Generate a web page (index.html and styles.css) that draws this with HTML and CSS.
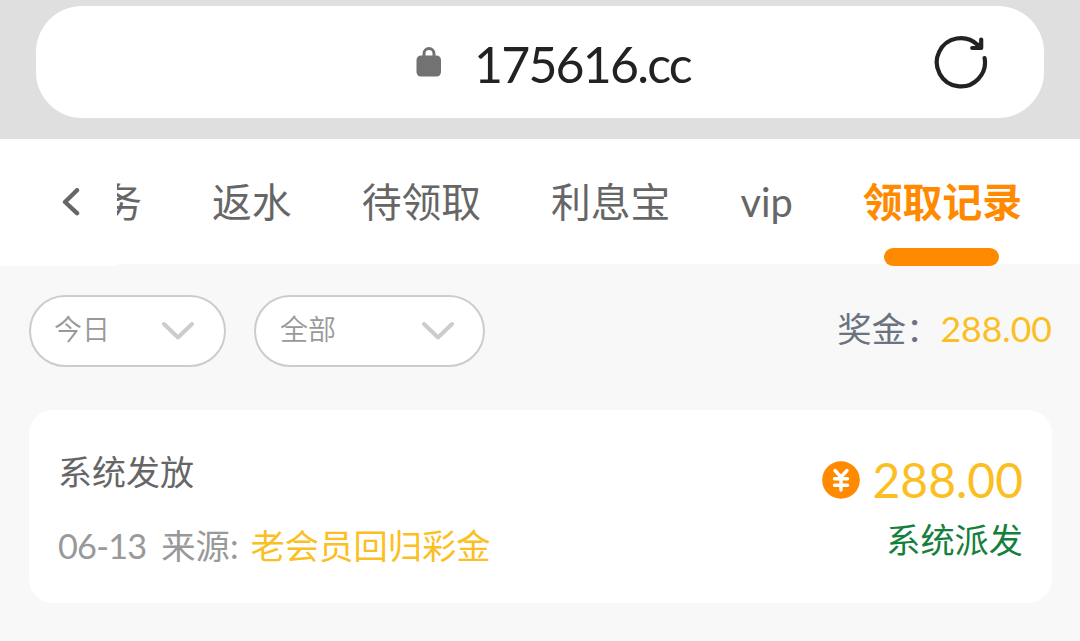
FILE: index.html
```
<!DOCTYPE html>
<html lang="zh-CN">
<head>
  <meta charset="UTF-8" />
  <meta name="viewport" content="width=device-width, initial-scale=1.0"/>
  <title>领取记录</title>
  <link rel="stylesheet" href="styles.css">
</head>
<body>
  <header class="browser-bar">
    <div class="address">
      <svg class="lock" width="26" height="32" viewBox="0 0 26 32">
        <path d="M8 13V7.5a5 5 0 0 1 10 0V13" fill="none" stroke="#727272" stroke-width="3"/>
        <rect x="0.5" y="9.5" width="24.5" height="21" rx="4.5" fill="#727272"/>
      </svg>
      <span class="url">175616.cc</span>
      <svg class="reload" width="56" height="56" viewBox="0 0 56 56" fill="none" stroke="#222" stroke-width="4.2" stroke-linecap="round" stroke-linejoin="round">
        <path d="M51.6 24A24.1 24.1 0 1 1 44.5 10.8L47.5 13.8"/>
        <path d="M48.2 5.5V14H39.2M44.5 12.8L47 10.5"/>
      </svg>
    </div>
  </header>

  <nav class="tabs">
    <button class="back">
      <svg width="18" height="28" viewBox="0 0 18 28" fill="none" stroke="#666" stroke-width="4.4" stroke-linecap="round" stroke-linejoin="round">
        <path d="M15 2.2L3 14L15 25.2"/>
      </svg>
    </button>
    <div class="tab-list">
      <a class="tab">任务</a>
      <a class="tab">返水</a>
      <a class="tab">待领取</a>
      <a class="tab">利息宝</a>
      <a class="tab">vip</a>
      <a class="tab active">领取记录</a>
    </div>
  </nav>

  <main>
    <div class="filters">
      <div class="select">
        <span>今日</span>
        <svg width="34" height="22" viewBox="0 0 34 22" fill="none" stroke="#ccc" stroke-width="4" stroke-linecap="round" stroke-linejoin="round">
          <path d="M3 4L17 17.5L31 4"/>
        </svg>
      </div>
      <div class="select wide">
        <span>全部</span>
        <svg width="34" height="22" viewBox="0 0 34 22" fill="none" stroke="#ccc" stroke-width="4" stroke-linecap="round" stroke-linejoin="round">
          <path d="M3 4L17 17.5L31 4"/>
        </svg>
      </div>
      <div class="total">奖金：<span class="total-num">288.00</span></div>
    </div>

    <div class="record">
      <div class="info">
        <div class="title">系统发放</div>
        <div class="source"><span class="date">06-13</span><span class="from">来源:</span><span class="name">老会员回归彩金</span></div>
      </div>
      <div class="result">
        <div class="amount">
          <svg width="38" height="38" viewBox="0 0 38 38">
            <circle cx="19" cy="19" r="18.8" fill="#ff8a00"/>
            <path d="M13 9.5L19 16L25 9.5M12.5 17.8H25.5M12.5 24.2H25.5M19 16V29" fill="none" stroke="#fff" stroke-width="3.4" stroke-linecap="round" stroke-linejoin="round"/>
          </svg>
          <span>288.00</span>
        </div>
        <div class="status">系统派发</div>
      </div>
    </div>
  </main>
</body>
</html>
```
FILE: styles.css
```
* {
  box-sizing: border-box;
}

body {
  margin: 0;
  height: 641px;
  overflow: hidden;
  font-family: Lato, 'Noto Sans CJK SC', sans-serif;
  background: #f8f8f8;
  color: #666;
}

svg {
  display: block;
  flex: none;
}

/* browser address bar */
.browser-bar {
  height: 139px;
  padding: 6px 36px 0;
  background: #dfdfdf;
}

.address {
  display: flex;
  align-items: center;
  height: 112px;
  padding: 0 55px 0 380px;
  background: #fff;
  border-radius: 46px;
}

.url {
  margin-left: 32px;
  padding-top: 4px;
  font-size: 50px;
  line-height: 60px;
  letter-spacing: -1.8px;
  color: #222;
}

.reload {
  margin-left: auto;
}

/* tabs */
.tabs {
  display: flex;
  align-items: flex-start;
  height: 127px;
}

.back {
  display: flex;
  align-items: center;
  width: 117px;
  height: 127px;
  padding: 0 0 2px 62px;
  border: none;
  background: #fff;
}

.tab-list {
  display: flex;
  justify-content: flex-end;
  flex: 1;
  height: 127px;
  padding-right: 23px;
  overflow: hidden;
  background: linear-gradient(#fff 125px, #f8f8f8 125px);
}

.tab {
  position: relative;
  flex: none;
  height: 127px;
  padding: 0 35px;
  font-size: 39.8px;
  line-height: 126px;
  white-space: nowrap;
}

.tab.active {
  color: #ff8a00;
  font-weight: bold;
}

.tab.active::after {
  content: "";
  position: absolute;
  left: 50%;
  bottom: 0;
  width: 115px;
  height: 18px;
  margin-left: -58px;
  border-radius: 9px;
  background: #ff8a00;
}

/* filters */
.filters {
  display: flex;
  align-items: center;
  gap: 28px;
  height: 101px;
  padding: 29px 28px 0 29px;
}

.select {
  display: flex;
  align-items: center;
  justify-content: space-between;
  width: 197px;
  height: 72px;
  padding: 0 29px 0 23px;
  border: 2px solid #ccc;
  border-radius: 36px;
  background: #fff;
  font-size: 28px;
  font-weight: 350;
  line-height: 64px;
  color: #999;
}

.select span {
  padding-bottom: 4px;
}

.select.wide {
  width: 231px;
  padding: 0 28px 0 24px;
}

.total {
  display: flex;
  align-items: baseline;
  margin-left: auto;
  padding-bottom: 4px;
  font-size: 34.4px;
  line-height: 68px;
  color: #6b7280;
}

.total-num {
  font-size: 35.6px;
  color: #fbbf24;
}

/* record card */
.record {
  display: flex;
  justify-content: space-between;
  height: 193px;
  margin: 43px 28px 0 29px;
  padding: 0 29px;
  border-radius: 24px;
  background: #fff;
}

.title {
  padding-top: 36px;
  font-size: 34px;
  line-height: 52px;
}

.source {
  display: flex;
  align-items: baseline;
  margin-top: 22px;
  font-size: 34.3px;
  line-height: 52px;
  color: #999;
}

.date {
  margin-right: 15px;
  letter-spacing: -0.8px;
}

.name {
  margin-left: 12px;
  color: #fbbf24;
}

.result {
  display: flex;
  flex-direction: column;
  align-items: flex-end;
}

.amount {
  display: flex;
  align-items: center;
  gap: 12px;
  padding-top: 40px;
  font-size: 48px;
  line-height: 60px;
  color: #fbbf24;
}

.status {
  margin-top: 4px;
  font-size: 34.2px;
  line-height: 52px;
  color: #15803d;
}
```
